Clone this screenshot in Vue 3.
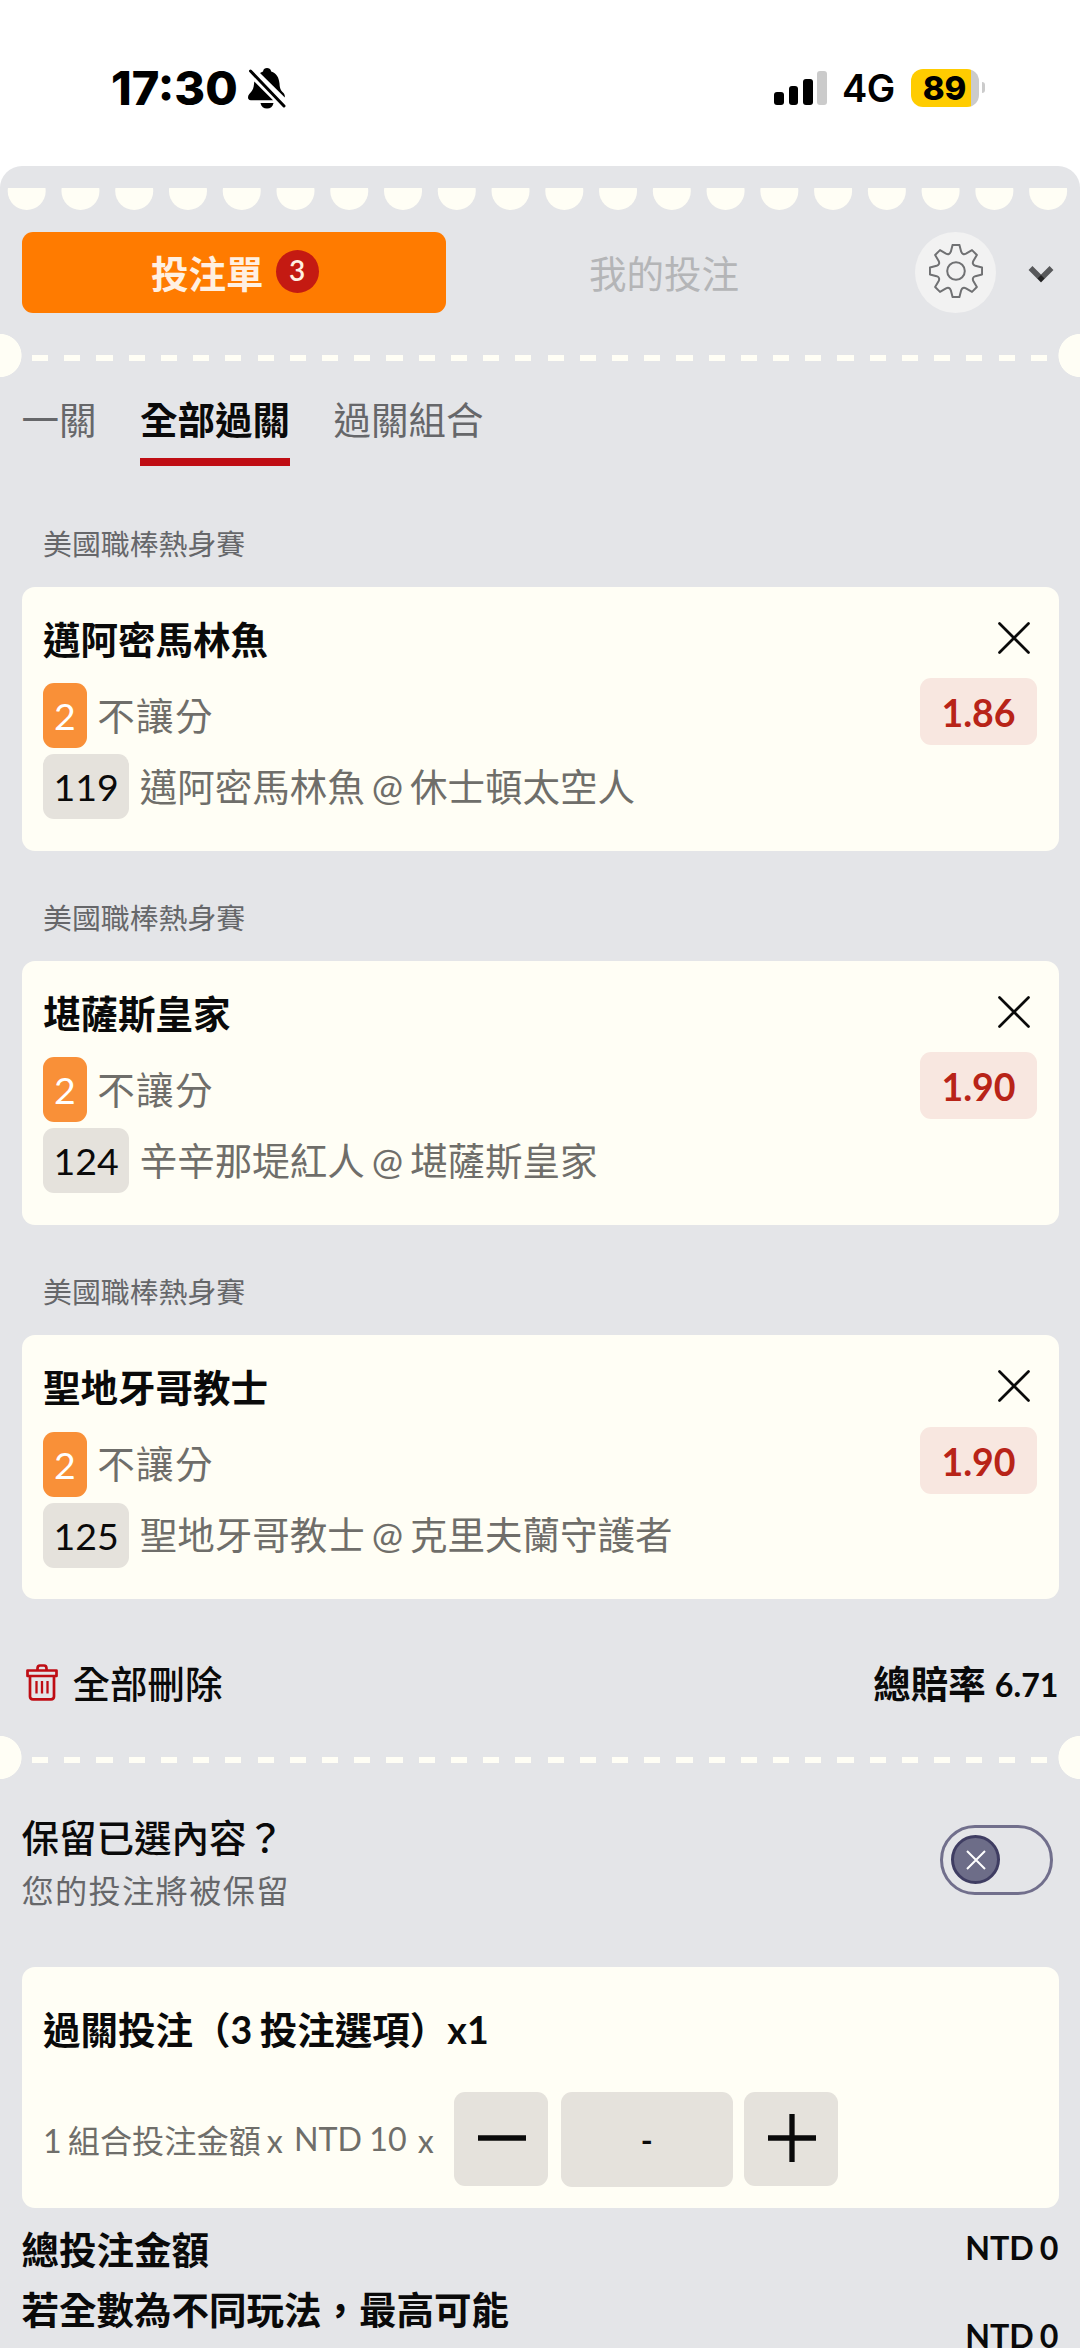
<template>
  <div class="screen">
    <header class="status">
      <div class="status-left">
        <span class="time">17:30</span>
        <svg class="bell" viewBox="0 0 38 41">
          <path d="M12 5 C13.5 4 14.5 3.5 15 3.4 C15.5 1 17 0 19 0 C21 0 22.600 1 23.200 3.400 C28.500 5.200 31 9.500 31.500 15.500 C31.800 21 33 22.500 35 24.500 C36.500 26 37 27.300 36.800 29.500 Z" />
          <path d="M6.300 13.500 L25 32.200 H2.800 C0.800 32.200 0 31 0 29.300 C0 26.500 2.200 25.500 4 22.800 C5.800 20 5.900 17 6.300 13.500 Z" />
          <path d="M12.500 35 H25.500 C24.800 38.700 22.300 40.500 19 40.500 C15.700 40.500 13.200 38.700 12.500 35 Z" />
          <path class="slash" d="M2.500 3 L36 38" />
        </svg>
      </div>
      <div class="status-right">
        <div class="signal"><i></i><i></i><i></i><i class="off"></i></div>
        <span class="net">4G</span>
        <div class="battery">
          <div class="battery-body"><span>89</span></div>
          <div class="battery-nub"></div>
        </div>
      </div>
    </header>

    <main class="slip">
      <div class="scallops">
        <svg viewBox="0 0 1080 22">
          <circle v-for="n in 20" :key="n" :cx="26.700 + (n - 1) * 53.760" cy="3" r="19" />
        </svg>
      </div>

      <div class="top-tabs">
        <button class="tab-slip">投注單<b>{{ bets.length }}</b></button>
        <button class="tab-mine">我的投注</button>
        <button class="settings">
          <svg viewBox="0 0 54 54">
            <path :d="gearPath" />
            <circle cx="27" cy="27" r="8.800" />
          </svg>
        </button>
        <svg class="chevron" viewBox="0 0 26 18">
          <path d="M2.500 3 L13 13.500 L23.500 3" />
          <path class="tip" d="M13 10 L16.500 13.500 L13 17 L9.500 13.500 Z" />
        </svg>
      </div>

      <div class="divider"></div>

      <nav class="modes">
        <button
          v-for="m in modes"
          :key="m"
          :class="{ active: m === mode }"
          @click="mode = m"
        >{{ m }}</button>
      </nav>

      <section v-for="bet in bets" :key="bet.no" class="bet">
        <p class="league">{{ bet.league }}</p>
        <div class="card bet-card">
          <div class="bet-info">
            <h3>{{ bet.pick }}</h3>
            <p class="line market"><span class="tag orange">2</span>不讓分</p>
            <p class="line match"><span class="tag">{{ bet.no }}</span>{{ bet.away }} @ {{ bet.home }}</p>
          </div>
          <div class="bet-side">
            <svg class="close" viewBox="0 0 32 32"><path d="M1.500 1.500 L30.500 30.500 M30.500 1.500 L1.500 30.500" /></svg>
            <span class="odds">{{ bet.odds }}</span>
          </div>
        </div>
      </section>

      <div class="summary">
        <button class="remove">
          <svg viewBox="0 0 32 37">
            <path d="M1.500 6.500 H30.500 V12 H1.500 Z" />
            <path d="M4 12 V32.500 Q4 35.300 7 35.300 H25 Q28 35.300 28 32.500 V12" />
            <path d="M11.500 6.500 V4.500 Q11.500 1.500 14 1.500 H18 Q20.500 1.500 20.500 4.500 V6.500" />
            <path class="bars" d="M10.500 17 V29.500 M16 17 V29.500 M21.500 17 V29.500" />
          </svg>
          全部刪除
        </button>
        <span class="total">總賠率 <em>6.71</em></span>
      </div>

      <div class="divider"></div>

      <div class="keep">
        <div>
          <p class="keep-title">保留已選內容？</p>
          <p class="keep-sub">您的投注將被保留</p>
        </div>
        <button class="toggle">
          <span class="knob">
            <svg viewBox="0 0 20 20"><path d="M1 1 L19 19 M19 1 L1 19" /></svg>
          </span>
        </button>
      </div>

      <div class="card stake">
        <h3>過關投注（3 投注選項）x1</h3>
        <div class="stake-row">
          <span class="stake-label">1 組合投注金額 x <span class="unit">NTD 10</span> x</span>
          <button class="step">
            <svg viewBox="0 0 48 48"><path d="M0 24 H48" /></svg>
          </button>
          <span class="amount">-</span>
          <button class="step">
            <svg viewBox="0 0 48 48"><path d="M0 24 H48 M24 0 V48" /></svg>
          </button>
        </div>
      </div>

      <div class="totals">
        <p><span>總投注金額</span><em>NTD 0</em></p>
        <p class="payout"><span>若全數為不同玩法，最高可能</span><em>NTD 0</em></p>
      </div>
    </main>
  </div>
</template>

<script setup>
import { ref } from "vue"

const modes = ["一關", "全部過關", "過關組合"]
const mode = ref("全部過關")

const bets = ref([
  { league: "美國職棒熱身賽", pick: "邁阿密馬林魚", no: 119, away: "邁阿密馬林魚", home: "休士頓太空人", odds: "1.86" },
  { league: "美國職棒熱身賽", pick: "堪薩斯皇家", no: 124, away: "辛辛那堤紅人", home: "堪薩斯皇家", odds: "1.90" },
  { league: "美國職棒熱身賽", pick: "聖地牙哥教士", no: 125, away: "聖地牙哥教士", home: "克里夫蘭守護者", odds: "1.90" }
])

// 齒輪外框：八個齒，齒間以弧線連接
const point = (deg, r) => {
  const a = (deg * Math.PI) / 180
  return `${(27 + r * Math.sin(a)).toFixed(2)} ${(27 - r * Math.cos(a)).toFixed(2)}`
}

const gearPath = Array.from({ length: 8 }, (_, i) => {
  const d = i * 45
  return `${i ? "L" : "M"}${point(d - 7.5, 26.3)} L${point(d + 7.5, 26.3)} L${point(d + 15, 20)} Q${point(d + 22.5, 17)} ${point(d + 30, 20)}`
}).join(" ") + " Z"
</script>

<style>
body {
  background: #fff;
}
</style>

<style scoped>
.screen {
  width: 1080px;
  height: 2348px;
  overflow: hidden;
  background: #fff;
  color: #0a0a0a;
  font-family: Lato, "Noto Sans CJK TC", sans-serif;
  font-size: 37.5px;
}

p,
h3 {
  margin: 0;
  font-size: inherit;
}

em {
  font-style: normal;
}

button {
  border: none;
  padding: 0;
  background: none;
  font: inherit;
  color: inherit;
  white-space: nowrap;
}

svg {
  display: block;
  flex: none;
}

.status {
  height: 166px;
  box-sizing: border-box;
  padding: 10px 95px 0 111px;
  display: flex;
  align-items: center;
  justify-content: space-between;
  font-family: Inter, sans-serif;
  color: #000;
}

.status-left,
.status-right {
  display: flex;
  align-items: center;
}

.time {
  width: 137px;
  margin-top: -2px;
  font-size: 47px;
  font-weight: 800;
}

.bell {
  width: 38px;
  height: 41px;
}

.slash {
  fill: none;
  stroke: #000;
  stroke-width: 3;
  stroke-linecap: round;
}

.signal {
  display: flex;
  align-items: flex-end;
  gap: 4.8px;
  height: 34px;
  margin-right: 15px;
}

.signal i {
  width: 9.600px;
  height: 13px;
  border-radius: 3px;
  background: #000;
}

.signal i:nth-child(2) {
  height: 19px;
}

.signal i:nth-child(3) {
  height: 26px;
}

.signal .off {
  height: 34px;
  background: #cbcbcb;
}

.net {
  width: 69px;
  font-size: 38px;
  font-weight: 600;
  letter-spacing: -0.5px;
}

.battery {
  display: flex;
  align-items: center;
  gap: 2.500px;
  margin-top: -1px;
}

.battery-body {
  width: 68px;
  height: 38px;
  border-radius: 12px;
  background: linear-gradient(to right, #ffcc00 60px, #cbcbcb 60px);
  font-size: 33px;
  font-weight: 800;
  line-height: 38px;
  text-align: center;
}

.battery-body span {
  margin-right: 1px;
}

.battery-nub {
  width: 3.500px;
  height: 11px;
  border-radius: 0 4px 4px 0;
  background: #cbcbcb;
}

.slip {
  height: 2182px;
  border-radius: 22px 22px 0 0;
  background: #e4e5e8;
}

.scallops {
  padding-top: 22px;
}

.scallops svg {
  width: 1080px;
  height: 22px;
  fill: #fffef5;
}

.top-tabs {
  height: 80.500px;
  padding: 22px 26px 0 21.500px;
  display: flex;
  align-items: center;
}

.tab-slip {
  width: 424.500px;
  height: 80.500px;
  padding: 0 0 2px 2px;
  box-sizing: border-box;
  border-radius: 11px;
  display: flex;
  align-items: center;
  justify-content: center;
  gap: 12px;
  background: #ff7b00;
  color: #fff0e2;
  font-weight: 700;
}

.tab-slip b {
  width: 43px;
  height: 43px;
  border-radius: 50%;
  background: #c41a12;
  font-size: 28px;
  font-weight: 600;
  line-height: 41px;
}

.tab-mine {
  flex: 1;
  padding: 0 33px 2px 0;
  color: #b4b5b7;
  font-weight: 400;
}

.settings {
  width: 81px;
  height: 81px;
  border-radius: 50%;
  display: grid;
  place-items: center;
  background: #f2f2f2;
  margin-right: 32px;
}

.settings svg {
  width: 54px;
  height: 54px;
  margin-bottom: 2px;
  fill: none;
  stroke: #707173;
  stroke-width: 2;
  stroke-linejoin: round;
}

.chevron {
  width: 26px;
  height: 18px;
  margin-top: 3px;
  fill: none;
  stroke: #58595b;
  stroke-width: 5.500;
}

.chevron .tip {
  fill: #222;
  stroke: none;
}

/* 票券撕線：兩側半圓缺口與中間虛線 */
.divider {
  height: 43px;
  background:
    radial-gradient(circle at 0 50%, #fffef5 21.200px, transparent 21.900px),
    radial-gradient(circle at 100% 50%, #fffef5 21.200px, transparent 21.900px),
    repeating-linear-gradient(to right, #fffef5 0 16.100px, transparent 16.100px 32.220px) 32px 21px / 1016px 6px no-repeat;
}

.top-tabs + .divider {
  margin-top: 21.500px;
}

.modes {
  display: flex;
  gap: 43.500px;
  height: 89px;
  padding: 0 21.500px;
  color: #66676a;
}

.modes button {
  height: 89px;
  padding-bottom: 1px;
  box-sizing: border-box;
  border-bottom: 8px solid transparent;
  font-weight: 400;
}

.modes .active {
  border-color: #bf0d14;
  color: #0a0a0a;
  font-weight: 700;
}

.bet {
  padding: 44.300px 21.500px 0;
}

.modes + .bet {
  padding-top: 54.500px;
}

.league {
  height: 66px;
  padding-left: 21.500px;
  line-height: 45px;
  font-size: 28.900px;
  color: #66676a;
}

.card {
  border-radius: 13px;
  background: #fffef5;
}

.bet-card {
  height: 264px;
  box-sizing: border-box;
  padding: 25px 21.500px 0;
  display: flex;
  justify-content: space-between;
}

.card h3 {
  line-height: 56px;
  font-weight: 700;
  word-spacing: -1.500px;
}

.line {
  display: flex;
  align-items: center;
  height: 65px;
  color: #6f6e6a;
  line-height: 62px;
  word-spacing: -2.600px;
}

.market {
  margin: 15.500px 0 6px;
  letter-spacing: 1.340px;
}

.tag {
  min-width: 43px;
  height: 65px;
  padding: 0 11px;
  margin-right: 10.500px;
  box-sizing: border-box;
  border-radius: 11px;
  background: #e5e2dc;
  color: #0a0a0a;
  line-height: 65px;
  letter-spacing: 0;
  text-align: center;
}

.match .tag {
  padding: 0 10.500px;
}

.tag.orange {
  background: #f99038;
  color: #fff;
}

.bet-side {
  display: flex;
  flex-direction: column;
  align-items: flex-end;
  padding-top: 10px;
}

.close {
  width: 32px;
  height: 32px;
  margin: 0 7px 24.500px 0;
  fill: none;
  stroke: #0a0a0a;
  stroke-width: 2.700;
  stroke-linecap: round;
}

.odds {
  width: 117px;
  height: 67px;
  border-radius: 11px;
  background: #f8e7e0;
  color: #b82418;
  font-weight: 700;
  line-height: 69px;
  text-align: center;
}

.summary {
  height: 137px;
  box-sizing: border-box;
  padding: 35px 21.500px 0;
  display: flex;
  align-items: flex-start;
  justify-content: space-between;
  line-height: 100px;
  font-weight: 500;
}

.remove {
  display: flex;
  align-items: center;
  gap: 15px;
  padding-left: 4px;
  font-weight: 500;
}

.remove svg {
  width: 32px;
  height: 37px;
  margin-bottom: 3px;
  fill: none;
  stroke: #bf0d14;
  stroke-width: 2.700;
  stroke-linejoin: round;
}

.remove .bars {
  stroke-width: 2.300;
}

.total {
  font-weight: 700;
}

.total em {
  position: relative;
  top: -1px;
  font-size: 32.200px;
  font-weight: 700;
}

.keep {
  height: 188px;
  box-sizing: border-box;
  padding: 30.500px 27px 0 21.500px;
  display: flex;
  justify-content: space-between;
}

.keep-title {
  line-height: 56px;
  font-weight: 500;
}

.keep-sub {
  line-height: 50px;
  font-size: 32.200px;
  letter-spacing: 1.340px;
  color: #66676a;
}

.toggle {
  width: 113px;
  height: 70px;
  margin-top: 15px;
  padding-left: 8px;
  box-sizing: border-box;
  display: flex;
  align-items: center;
  border: 3px solid #716f8c;
  border-radius: 35px;
}

.knob {
  width: 49px;
  height: 49px;
  box-sizing: border-box;
  display: grid;
  place-items: center;
  border: 3px solid #3f3d62;
  border-radius: 50%;
  background: #6d6d88;
}

.knob svg {
  width: 20px;
  height: 20px;
  stroke: #fff;
  stroke-width: 2;
}

.stake {
  height: 241px;
  box-sizing: border-box;
  margin: 0 21.500px;
  padding: 34.500px 21.500px 0;
}

.stake-row {
  display: flex;
  margin-top: 34px;
}

.stake-label {
  width: 410.500px;
  line-height: 97px;
  font-size: 32.200px;
  white-space: nowrap;
  word-spacing: -2.200px;
  color: #6f6e6a;
}

.unit {
  position: relative;
  top: -2px;
  margin: 0 5px;
  word-spacing: -1px;
}

.step {
  width: 94px;
  height: 94px;
  display: grid;
  place-items: center;
  border-radius: 11px;
  background: #e5e2dc;
}

.step svg {
  width: 48px;
  height: 48px;
  margin: 0 0 1px 2px;
  stroke: #0a0a0a;
  stroke-width: 5.300;
}

.amount {
  width: 172.500px;
  height: 95px;
  margin: 0 11px 0 13px;
  border-radius: 11px;
  background: #e5e2dc;
  line-height: 95px;
  font-size: 32.200px;
  font-weight: 700;
  text-align: center;
}

.totals {
  padding: 12px 21.500px 0;
}

.totals p {
  display: flex;
  justify-content: space-between;
  line-height: 60px;
  font-weight: 700;
}

.totals em {
  font-size: 32.200px;
  font-weight: 700;
  line-height: 56px;
  word-spacing: -1.800px;
}

.payout em {
  padding-top: 28px;
}
</style>
